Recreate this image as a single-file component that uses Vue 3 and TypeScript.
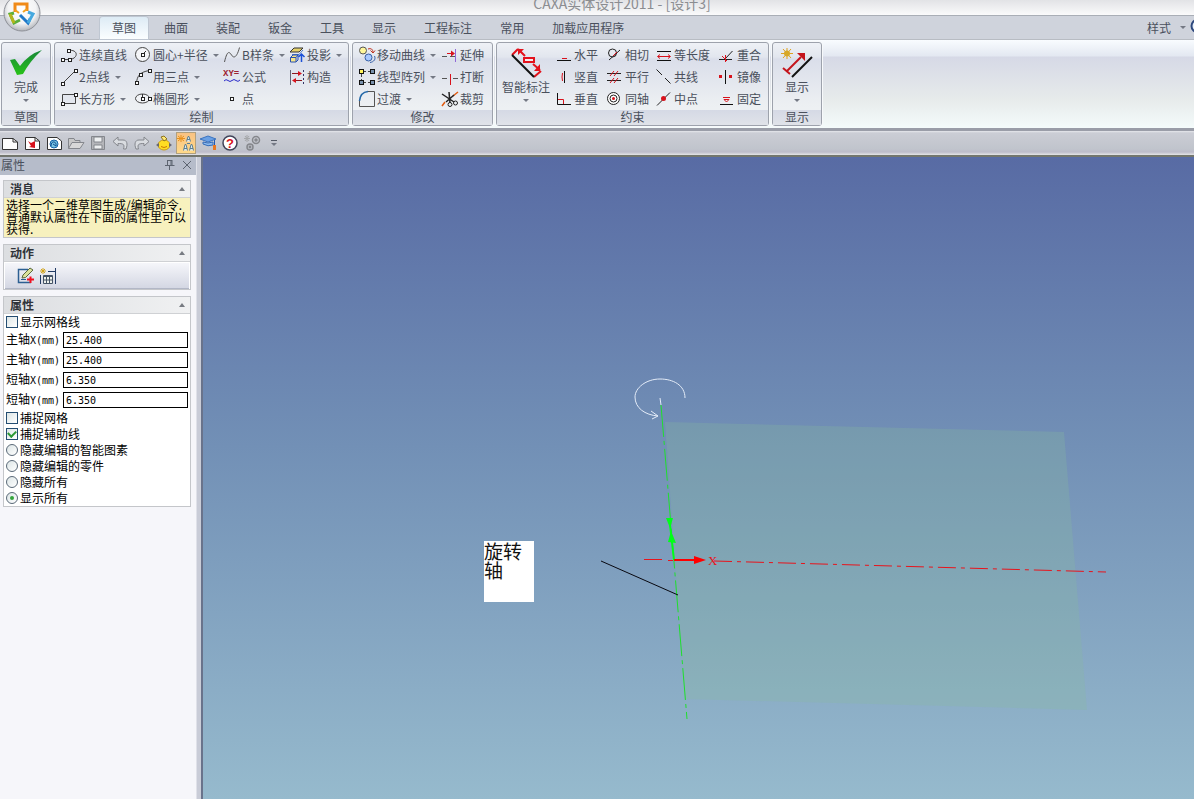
<script setup lang="ts">
import { ref } from 'vue'

interface Command {
  label: string
  icon: string
  menu?: boolean
}

const node = (x: number, y: number): string =>
  `<rect x="${x - 1}" y="${y - 1}" width="3" height="3" fill="#fff" stroke="#222" shape-rendering="crispEdges"/>`
const line = (d: string, color = '#222', width = 1): string =>
  `<path d="${d}" fill="none" stroke="${color}" stroke-width="${width}"/>`
const solid = (d: string, color: string, stroke = 'none'): string =>
  `<path d="${d}" fill="${color}" stroke="${stroke}"/>`

const RED = '#d8121c'
const GREY = '#84878d'

const icons: Record<string, string> = {
  polyline: line('M2.5 13.5H9.5M8.5 4.500C18 3 19 12 10 13.5', '#444') + node(2, 13) + node(9, 13) + node(8, 4),
  line: line('M2.5 15.5L15.5 2.5', '#444') + node(2, 15) + node(15, 2),
  rect: solid('M2.5 4.5H15.5V13.5H2.5Z', '#e3e7ee', '#444') + node(2, 13) + node(15, 4),
  circle: '<circle cx="8.500" cy="8.500" r="7" fill="#f4f5f8" stroke="#444"/>' + line('M9 8L12 5', '#333') + node(8, 8),
  arc: line('M2.5 15C3 9 5 4 15.5 2.5', '#444') + node(2, 14) + node(6, 6) + node(15, 2),
  ellipse: '<ellipse cx="8.500" cy="8.500" rx="7" ry="4.5" fill="#f1f3f6" stroke="#444"/>' + line('M8.500 4V8', '#333') + node(8, 8) + node(15, 8),
  spline: line('M1.5 16C4 5 6 5 8.5 9S14 11 16.5 1.5', '#555'),
  formula: '<text x="0" y="8" font-size="9" font-weight="700" font-family="Liberation Mono, monospace" fill="#9c2030">XY=</text>' + line('M1 13Q3 10.500 5 12.5T9 12.5T13 12.5T17 12', '#2a2acb'),
  point: node(8, 8),
  project: solid('M6 2H15L11 6H2Z', '#e6d26a', '#333') + line('M4 8.500H11L15 4', '#4b78c8') + solid('M2.500 11.500L5 9H10L8 11.500V16H2.500Z', '#f6e68b', '#2850b0') + line('M2.500 11.500H8M10 9V14L8 16', '#2850b0') + line('M13.500 16V8M10.500 11L13.500 8L16.500 11', '#1c50d8', 1.500),
  construct: line('M2.500 2V17', '#667') + '<path d="M15.500 2V17" stroke="#336" stroke-dasharray="2 2"/>' + line('M4 5.500H13M5 12.500H14', '#8c1a20') + solid('M10 3L14 5.500L10 8Z', RED) + solid('M8 10L4 12.500L8 15Z', RED),
  move: '<circle cx="5" cy="4.500" r="3.500" fill="#fff79a" stroke="#555"/>' + line('M10 3C13 2 15 3 15 7M12.500 4.500L15 7L17 4.500', '#c0301c') + '<circle cx="10.500" cy="11.500" r="3.500" fill="#a8c8ff" stroke="#3760a8"/>' + line('M16.500 10C18 13 16 16 12 16.500', '#3760a8'),
  array: '<path d="M5 3.500H14M3.500 6V14M5 14.500H14" stroke="#444" stroke-dasharray="3 2"/>' + '<g stroke="#111"><rect x="1.500" y="1.500" width="4" height="4" fill="#fff25a"/><rect x="12.500" y="1.500" width="4" height="4" fill="#7890ac"/><rect x="1.500" y="12.500" width="4" height="4" fill="#7890ac"/><rect x="12.500" y="12.500" width="4" height="4" fill="#7890ac"/></g>',
  fillet: line('M1.500 10V16.500H16.500V1.500H10', '#555') + line('M1.500 11C2 5 5 2 10 1.500', '#2468a8', 1.500),
  extend: line('M1 10.500H6M9 10.500H14', '#555') + line('M14.500 3V16', '#9068d8') + line('M6 7.500H12', RED) + solid('M10 4.500L14 7.500L10 10.500Z', RED),
  split: line('M1 10.500H6M12 10.500H17', '#555') + line('M9.500 6V17', RED),
  trim: line('M1 16L4 12M12 6L17 2', '#e05a10', 1.500) + line('M1 4L13 12M8 2L9 13M13 5L5 12', '#222', 1.500) + '<circle cx="9" cy="14.500" r="2" fill="none" stroke="#222"/><circle cx="14.500" cy="13" r="2" fill="none" stroke="#222"/>',
  horizontal: line('M2 14.500H16', '#111') + line('M7 12.500H12', RED),
  vertical: line('M9.500 3V15', '#111') + line('M7.500 5Q6.500 9 7.500 13', RED),
  perpendicular: line('M2.500 3V14.500H16', '#111') + line('M3 9.500H8.500V14', RED),
  tangent: '<circle cx="6.500" cy="7" r="4" fill="none" stroke="#222"/>' + line('M3 14L14 4', '#222') + line('M7 10L11 6', RED),
  parallel: line('M1 5.500H15M1 12.500H15', '#222') + line('M4 8L8 3M8 8L12 3M4 15L8 10M8 15L12 10', RED),
  concentric: '<circle cx="7.500" cy="8.500" r="6" fill="#fff" stroke="#222"/><circle cx="7.500" cy="8.500" r="3.500" fill="#fff" stroke="#222"/><circle cx="7.500" cy="8.500" r="1.500" fill="#d8121c"/>',
  equal: line('M2 5.500H16M2 14.500H16', '#111') + line('M3 10.500H15M5 8.500L2.500 10.500L5 12.500M13 8.500L15.500 10.500L13 12.500', RED),
  collinear: line('M1.500 1.500L7 7M10 10L15.500 15.500', '#222'),
  midpoint: line('M2 15.500L15 2.500', '#222') + '<circle cx="8.500" cy="8.500" r="2.500" fill="#d8121c"/>',
  coincident: line('M1 13.500H14M7 13L14.500 5', '#222') + line('M4 10L9 15M7.500 9V16', RED),
  mirror: line('M7.500 2V16', '#111') + '<path d="M1 7h3v3h-3zM11 7h3v3h-3z" fill="#d8121c"/>',
  fix: line('M2 14.500H15', '#111') + line('M5 7.500H12M6 9.500L8.500 12L11 9.500Z', RED),
  blank: solid('M1.500 4.500H12L16.500 8V15.500H1.500Z', '#fdfdfd', '#333') + line('M12 4.500V8H16.500', '#333'),
  newPart: solid('M2.500 3.500H12L16.500 7V15.500H2.500Z', '#fff', '#333') + line('M12 3.500V7H16', '#333') + solid('M5 7L8 9L12 7L12 14L6 13L8 12Z', RED),
  newDrawing: solid('M2.500 3.500H12L16.500 7V15.500H2.500Z', '#fff', '#333') + '<circle cx="9" cy="10" r="4" fill="#79c5e4" stroke="#1663a8"/>' + line('M6 12C6 6 12 7 11 12L8 10', '#0b4b90'),
  open: solid('M1.500 14.500V4.500H7L8 6.500H13V8.500', '#c8c8c8', GREY) + solid('M1.500 14.500L5 8.500H17L13 14.500Z', '#d8d8d8', GREY),
  save: solid('M2.500 2.500H15.500V15.500H2.500Z', '#b4b5b9', GREY) + solid('M5 3H13V8H5ZM5 11H13V15H5Z', '#eef0f1', GREY),
  undo: solid('M2 7.500L7 3V6H12C16 6 17 10 15 15H12.500C14 10 12 9.500 7 9.500V12Z', '#d9dce0', GREY),
  redo: solid('M16 7.500L11 3V6H6C2 6 1 10 3 15H5.500C4 10 6 9.500 11 9.500V12Z', '#d9dce0', GREY),
  ball: '<ellipse cx="9" cy="11" rx="6" ry="5" fill="#ffdd22" stroke="#c79c1a"/>' + solid('M6 3L9 2L12 5L9 7Z', '#ffe977', '#8c7320') + solid('M1 11L4 9V13ZM17 11L14 9V13Z', '#667') + line('M6 12.500Q9 14.500 12 12.500', '#cb7a00'),
  tree: line('M4 1V8M0 4.500H8M1 2L7 7M7 2L1 7', '#e8901b') + '<g fill="#dce9ef" stroke="#5c7f92"><path d="M9.500 7.500L11 2.500H12L13.500 7.500M10 5.500H13M6.500 16.500L8 10.500H9L10.500 16.500M7 14.500H10M12.500 16.500L14 10.500H15L16.500 16.500M13 14.500H16M10 9.500H13"/></g>',
  learn: solid('M1 5L9 2L17 5L9 8Z', '#6aa0e4', '#3b74c0') + solid('M4 8L9 9L14 8V11Q9 13 4 10Z', '#8ab8ec', '#346db8') + line('M15.500 6V12', '#225ab5') + solid('M14 11H17V16H14Z', '#e87922'),
  help: '<circle cx="9" cy="9" r="7" fill="#fff" stroke="#41445a" stroke-width="1.500"/><text x="9" y="13.500" text-anchor="middle" font-family="Liberation Sans, sans-serif" font-size="13" font-weight="700" fill="#d8121c">?</text>',
  gears: '<g fill="none" stroke="#85878c" stroke-width="1.500"><circle cx="13" cy="6" r="3.500"/><circle cx="13" cy="6" r="1"/><circle cx="7" cy="13" r="3"/><circle cx="7" cy="13" r=".7"/></g>' + line('M4 1V8M1 4.500H7M2 2L6 7M6 2L2 7', '#a5a7aa'),
  editSketch: line('M11 2.500H1.500V15.500H14', '#2c5f92', 1.500) + line('M4 12.500H9', '#2c5f92') + solid('M5 11L6 8L13 1L16 3L8.500 10.500Z', '#dbe29b', '#5b683d') + line('M13.500 9.500V16M10 12.500H17', '#f01020', 2),
  newTable: line('M4 1V7M1 4H7M2 2L6 6M6 2L2 6', '#d2a51e') + line('M1.500 8V17M16.500 1V17M9 4.500H16', '#223b64') + solid('M4.500 8.500H13.500V16.500H4.500Z', '#edf1ec', '#445365') + line('M4.500 9.500H13.500M4.500 13H13.500M7.500 9V16M10.500 9V16', '#445365'),
}

const tabs = ['特征', '草图', '曲面', '装配', '钣金', '工具', '显示', '工程标注', '常用', '加载应用程序']
const activeTab = ref('草图')

const drawCommands: Command[] = [
  { label: '连续直线', icon: 'polyline' },
  { label: '2点线', icon: 'line', menu: true },
  { label: '长方形', icon: 'rect', menu: true },
  { label: '圆心+半径', icon: 'circle', menu: true },
  { label: '用三点', icon: 'arc', menu: true },
  { label: '椭圆形', icon: 'ellipse', menu: true },
  { label: 'B样条', icon: 'spline', menu: true },
  { label: '公式', icon: 'formula' },
  { label: '点', icon: 'point' },
  { label: '投影', icon: 'project', menu: true },
  { label: '构造', icon: 'construct' },
]
const modifyCommands: Command[] = [
  { label: '移动曲线', icon: 'move', menu: true },
  { label: '线型阵列', icon: 'array', menu: true },
  { label: '过渡', icon: 'fillet', menu: true },
  { label: '延伸', icon: 'extend' },
  { label: '打断', icon: 'split' },
  { label: '裁剪', icon: 'trim' },
]
const constraintCommands: Command[] = [
  { label: '水平', icon: 'horizontal' },
  { label: '竖直', icon: 'vertical' },
  { label: '垂直', icon: 'perpendicular' },
  { label: '相切', icon: 'tangent' },
  { label: '平行', icon: 'parallel' },
  { label: '同轴', icon: 'concentric' },
  { label: '等长度', icon: 'equal' },
  { label: '共线', icon: 'collinear' },
  { label: '中点', icon: 'midpoint' },
  { label: '重合', icon: 'coincident' },
  { label: '镜像', icon: 'mirror' },
  { label: '固定', icon: 'fix' },
]

const quickTools = ['blank', 'newPart', 'newDrawing', 'open', 'save', 'undo', 'redo', 'ball', 'tree', 'learn', 'help', 'gears']

const spacing = ref([
  { id: 'major-x', name: '主轴', unit: 'X(mm)', value: '25.400' },
  { id: 'major-y', name: '主轴', unit: 'Y(mm)', value: '25.400' },
  { id: 'minor-x', name: '短轴', unit: 'X(mm)', value: '6.350' },
  { id: 'minor-y', name: '短轴', unit: 'Y(mm)', value: '6.350' },
])
const showGrid = ref(false)
const snapGrid = ref(false)
const snapGuides = ref(true)
const visibilityOptions = ['隐藏编辑的智能图素', '隐藏编辑的零件', '隐藏所有', '显示所有']
const visibility = ref('显示所有')
</script>

<template>
  <div class="app">
    <header class="titlebar">
      <span class="title">CAXA实体设计2011 - [设计3]</span>
      <button class="orb" aria-label="CAXA">
        <svg width="38" height="38" viewBox="0 0 38 38">
          <defs>
            <radialGradient id="orbFill" cx=".5" cy=".4" r=".6">
              <stop offset="0" stop-color="#fff" />
              <stop offset=".65" stop-color="#f3f4f5" />
              <stop offset="1" stop-color="#b2b5bb" />
            </radialGradient>
          </defs>
          <circle cx="19" cy="19" r="18" fill="url(#orbFill)" stroke="#8f9299" />
          <g fill="none" stroke-width="3">
            <path d="M12 18V10H24V17" stroke="#f08a18" />
            <path d="M12 16L16 19M24 15L20 18" stroke="#f3a320" stroke-width="2" />
            <path d="M11 19L7 20L11 29L17 26" stroke="#5aae3a" />
            <path d="M7 20L11 29" stroke="#b5b51b" />
            <path d="M17 21L25 29L27 25" stroke="#1f78c8" />
            <path d="M25 29L30 20L25 18" stroke="#46a9df" />
          </g>
        </svg>
      </button>
    </header>

    <nav class="tabs">
      <button
        v-for="tab in tabs"
        :key="tab"
        class="tab"
        :class="{ active: tab === activeTab }"
        @click="activeTab = tab"
      >{{ tab }}</button>
      <button class="style-menu">样式<i class="caret"></i></button>
      <button class="edge-help" aria-label="帮助">
        <svg width="16" height="16" viewBox="0 0 16 16"><circle cx="8" cy="8" r="6.500" fill="#e8f0fa" stroke="#2c477c" stroke-width="2" /></svg>
      </button>
    </nav>

    <div class="ribbon">
      <section class="panel single">
        <button class="big">
          <svg width="36" height="32" viewBox="0 0 36 32">
            <defs><linearGradient id="tick" x1="0" y1="0" x2="0" y2="1"><stop offset="0" stop-color="#17863a" /><stop offset="1" stop-color="#28c318" /></linearGradient></defs>
            <path d="M2 13L7 12L12 19Q21 7 34 3Q22 14 15 27L9 28Z" fill="url(#tick)" />
          </svg>
          <span>完成</span><i class="caret"></i>
        </button>
        <h2>草图</h2>
      </section>

      <section class="panel draw">
        <div class="commands">
          <button v-for="c in drawCommands" :key="c.label" class="command">
            <svg class="icon" viewBox="0 0 18 18" v-html="icons[c.icon]"></svg>
            <span>{{ c.label }}</span><i v-if="c.menu" class="caret"></i>
          </button>
        </div>
        <h2>绘制</h2>
      </section>

      <section class="panel modify">
        <div class="commands">
          <button v-for="c in modifyCommands" :key="c.label" class="command">
            <svg class="icon" viewBox="0 0 18 18" v-html="icons[c.icon]"></svg>
            <span>{{ c.label }}</span><i v-if="c.menu" class="caret"></i>
          </button>
        </div>
        <h2>修改</h2>
      </section>

      <section class="panel constraint">
        <div class="panel-body">
          <button class="big">
            <svg width="36" height="32" viewBox="0 0 36 32">
              <g fill="none" stroke="#e3121c" stroke-width="2">
                <path d="M4 8L10 2M26 30L33 24" />
                <path d="M10 2L17 9M25 17L32 23" />
                <rect x="16" y="11" width="10" height="4" fill="#f6e9ec" />
              </g>
              <path d="M10 2H16L10 8ZM32 24H26L32 17Z" fill="#e3121c" />
              <path d="M4 8L26 30" stroke="#111" stroke-width="2" />
            </svg>
            <span>智能标注</span><i class="caret"></i>
          </button>
          <div class="commands">
            <button v-for="c in constraintCommands" :key="c.label" class="command">
              <svg class="icon" viewBox="0 0 18 18" v-html="icons[c.icon]"></svg>
              <span>{{ c.label }}</span>
            </button>
          </div>
        </div>
        <h2>约束</h2>
      </section>

      <section class="panel single">
        <button class="big">
          <svg width="36" height="32" viewBox="0 0 36 32">
            <path d="M8 1V12M2 6.500H14M4 2L12 11M12 2L4 11" stroke="#dfa11d" />
            <circle cx="8" cy="6.500" r="3" fill="#d7a827" />
            <path d="M8 24L22 10" stroke="#c4141c" stroke-width="2" />
            <path d="M18 6H26V14Z" fill="#c4141c" />
            <path d="M4 21L11 27" stroke="#c4141c" stroke-width="2" />
            <path d="M13 30L33 10" stroke="#111" stroke-width="2" />
          </svg>
          <span>显示</span><i class="caret"></i>
        </button>
        <h2>显示</h2>
      </section>
    </div>

    <div class="quickbar">
      <button v-for="tool in quickTools" :key="tool" class="quick" :class="{ pressed: tool === 'tree' }" :aria-label="tool">
        <svg class="icon" viewBox="0 0 18 18" v-html="icons[tool]"></svg>
      </button>
      <button class="quick more" aria-label="more"><i class="bar"></i><i class="caret"></i></button>
    </div>

    <div class="workspace">
      <aside class="sidebar">
        <div class="dock-title">
          <span>属性</span>
          <button aria-label="pin">
            <svg width="12" height="12" viewBox="0 0 12 12"><path d="M3.500 1V6.500M3.500 1.500H8M8 1V6.500M7 2V6M1 6.500H10.500M5.500 7V11" fill="none" stroke="#5d6470" /></svg>
          </button>
          <button aria-label="close">
            <svg width="10" height="10" viewBox="0 0 10 10"><path d="M1 1L9 9M9 1L1 9" stroke="#5d6470" /></svg>
          </button>
        </div>

        <section class="box">
          <h3>消息<i class="caret up"></i></h3>
          <p class="message">选择一个二维草图生成/编辑命令.<br />普通默认属性在下面的属性里可以<br />获得.</p>
        </section>

        <section class="box">
          <h3>动作<i class="caret up"></i></h3>
          <div class="actions">
            <button aria-label="edit"><svg class="icon" viewBox="0 0 18 18" v-html="icons.editSketch"></svg></button>
            <button aria-label="table"><svg class="icon" viewBox="0 0 18 18" v-html="icons.newTable"></svg></button>
          </div>
        </section>

        <section class="box">
          <h3>属性<i class="caret up"></i></h3>
          <label class="option"><input v-model="showGrid" type="checkbox" />显示网格线</label>
          <div v-for="field in spacing" :key="field.id" class="field">
            <label :for="field.id">{{ field.name }}<span class="mono">{{ field.unit }}</span></label>
            <input :id="field.id" v-model="field.value" class="mono" type="text" />
          </div>
          <label class="option"><input v-model="snapGrid" type="checkbox" />捕捉网格</label>
          <label class="option"><input v-model="snapGuides" type="checkbox" />捕捉辅助线</label>
          <label v-for="option in visibilityOptions" :key="option" class="option">
            <input v-model="visibility" type="radio" name="visibility" :value="option" />{{ option }}
          </label>
        </section>
      </aside>

      <main class="viewport">
        <svg class="scene">
          <polygon points="462,265 861,275 884,553 482,542" fill="#88ba9e" fill-opacity=".28" />
          <g fill="none" stroke="#e4ecf8">
            <path d="M482 241C482 228 470 222 457 222C443 222 432 231 432 240C432 251 442 258 455 259" />
            <path d="M448 254L455 259L449 262" />
            <path d="M457 241L458 248" />
          </g>
          <path d="M458 248L484 562" stroke="#1fe02c" stroke-dasharray="32 4 4 4" />
          <path d="M467 368L471 403" stroke="#00ff18" stroke-width="2" />
          <path d="M463 361H470L467 371ZM465 385L468 374L473 386Z" fill="#00ff18" />
          <path d="M441 402.500H459M465 403.500H470" stroke="#e8141c" />
          <path d="M511 404L903 415" stroke="#e8141c" stroke-dasharray="18 5 4 5" />
          <path d="M471 403H493" stroke="#f00" stroke-width="2" />
          <path d="M491 399L503 403L491 407Z" fill="#f00" />
          <text x="505" y="408" class="axis">X</text>
          <path d="M398 404L475 438" stroke="#080810" />
        </svg>
        <div class="note">旋转<br />轴</div>
      </main>
    </div>
  </div>
</template>

<style>
html,
body {
  margin: 0;
  overflow: hidden;
}
</style>

<style scoped>
.app {
  display: flex;
  flex-direction: column;
  height: 100vh;
  overflow: hidden;
  font: 12px/16px "Noto Sans CJK SC", "Liberation Sans", sans-serif;
  color: #4a505c;
  background: #cfd3dc;
}
.app * {
  box-sizing: border-box;
}
button {
  padding: 0;
  border: 0;
  background: none;
  font: inherit;
  color: inherit;
}
h2,
h3,
p {
  margin: 0;
}
.icon {
  width: 18px;
  height: 18px;
  flex: none;
}
.caret {
  display: inline-block;
  flex: none;
  border: 3px solid transparent;
  border-top-color: #747984;
  border-bottom: 0;
}
.caret.up {
  border-top: 0;
  border-bottom: 4px solid #777b82;
}

.titlebar {
  position: relative;
  height: 15px;
  flex: none;
  background: linear-gradient(#e2e3e6, #fafafb);
  display: flex;
  justify-content: center;
  align-items: flex-start;
}
.title {
  margin: -6px 0 0 50px;
  font-size: 14px;
  line-height: 18px;
  color: #8b8d91;
}
.orb {
  position: absolute;
  left: 3px;
  top: -6px;
  height: 38px;
}

.tabs {
  display: flex;
  flex: none;
  height: 25px;
  padding-left: 46px;
  border-top: 1px solid #a9aeb6;
  border-bottom: 1px solid #b8bcc3;
  background: #cfd3dc;
}
.tab {
  margin: 1px 2px 0;
  padding: 0 12px;
}
.tab.active {
  border-radius: 3px 3px 0 0;
  background: linear-gradient(#ddebf5, #fbfeff);
  box-shadow: 0 0 0 1px #bfc7d2, 0 2px 0 #fbfeff;
}
.style-menu {
  display: flex;
  align-items: center;
  gap: 9px;
  margin-left: auto;
}
.edge-help {
  width: 4px;
  margin-left: 4px;
  overflow: hidden;
}

.ribbon {
  display: flex;
  flex: none;
  gap: 3px;
  height: 88px;
  padding: 2px 1px;
  background: linear-gradient(#f9fcff, #e3e8f1 16px, #d6d9e6 17px, #e7ebeb 60px, #f4fbfb);
}
.panel {
  display: flex;
  flex-direction: column;
  padding-top: 1px;
  border: 1px solid #9da2ac;
  border-radius: 3px;
  box-shadow: 0 0 0 1px #f7f9fb;
  background: linear-gradient(#eef1f6, #e2e6ee 14px, #dadeea 16px, #eceff2 60px, #f0f3f5);
}
.panel h2 {
  height: 15px;
  font: inherit;
  line-height: 14px;
  text-align: center;
  background: linear-gradient(#d5d9e5, #e0e3e9);
}
.panel-body {
  display: flex;
}
.single {
  width: 50px;
}
.draw {
  width: 295px;
}
.modify {
  width: 141px;
}
.constraint {
  width: 273px;
}
.commands {
  display: grid;
  grid-auto-flow: column;
  grid-template-rows: repeat(3, 22px);
}
.draw .commands {
  margin-left: 5px;
  grid-template-columns: 74px 89px 65px 60px;
}
.modify .commands {
  margin-left: 5px;
  grid-template-columns: 83px 51px;
}
.constraint .commands {
  grid-template-columns: 51px 49px 63px 50px;
}
.command {
  display: flex;
  align-items: center;
  gap: 1px;
  white-space: nowrap;
}
.command .caret {
  margin-left: 4px;
}
.big {
  display: flex;
  flex-direction: column;
  align-items: center;
  height: 66px;
  padding-top: 3px;
}
.big .caret {
  margin-top: 4px;
}
.constraint .big {
  width: 58px;
}

.quickbar {
  display: flex;
  flex: none;
  align-items: center;
  gap: 2px;
  height: 29px;
  border-top: 3px solid #9a9da8;
  border-bottom: 2px solid #73766e;
  background: linear-gradient(#e6e7ec, #cbcdd5 2px, #c0c4cc 18px, #bdbcca 21px, #e4e4e6);
}
.quick {
  display: flex;
  justify-content: center;
  align-items: center;
  width: 20px;
  height: 22px;
}
.quick.pressed {
  border: 1px solid #b1a07e;
  background: linear-gradient(#f9c282, #ffd989);
}
.more {
  flex-direction: column;
  gap: 2px;
}
.bar {
  width: 6px;
  height: 1px;
  background: #555b66;
}

.workspace {
  display: flex;
  flex: 1;
  min-height: 0;
}
.sidebar {
  width: 203px;
  flex: none;
  display: flex;
  flex-direction: column;
  align-items: flex-start;
  gap: 6px;
  border-right: 2px solid #69738b;
  background: linear-gradient(90deg, #f6f6fa 196px, #c9ccd7 197px);
}
.dock-title {
  display: flex;
  align-items: center;
  gap: 6px;
  width: 196px;
  height: 18px;
  margin-bottom: -1px;
  padding: 0 4px 2px 1px;
  background: #b6bcca;
}
.dock-title span {
  margin-right: auto;
}
.dock-title button {
  display: flex;
}
.box {
  width: 188px;
  margin-left: 3px;
  border: 1px solid #c4c6ca;
  background: #fff;
  color: #000;
}
.box h3 {
  display: flex;
  align-items: center;
  justify-content: space-between;
  height: 17px;
  padding: 0 5px 0 6px;
  font-size: 12px;
  font-weight: 700;
  color: #30343a;
  border-bottom: 1px solid #cfd1d4;
  background: linear-gradient(90deg, #dcdee1, #f0f1f2);
}
.message {
  height: 39px;
  padding: 1px 2px;
  line-height: 12px;
  white-space: nowrap;
  background: #f7f1be;
}
.actions {
  display: flex;
  align-items: center;
  gap: 4px;
  height: 26px;
  margin: 1px 1px 0;
  padding-left: 12px;
  background: linear-gradient(#f5f6fa, #d4d7e3);
  border-bottom: 1px solid #b2b7c6;
}
.box:nth-of-type(2) {
  height: 46px;
}
.actions button {
  display: flex;
}
.option {
  display: flex;
  align-items: center;
  gap: 2px;
  height: 16px;
  padding-left: 2px;
}
.option input {
  appearance: none;
  display: grid;
  place-items: center;
  width: 12px;
  height: 12px;
  margin: 0;
  border: 1px solid #244d72;
  background: linear-gradient(135deg, #dce5e6, #fff);
}
.option input[type='radio'] {
  border-color: #5a6978;
  border-radius: 50%;
}
.option input:checked::before {
  content: '';
}
.option input[type='checkbox']:checked::before {
  width: 6px;
  height: 4px;
  margin-bottom: 2px;
  border: solid #2c9834;
  border-width: 0 0 2px 2px;
  transform: rotate(-45deg);
}
.option input[type='radio']:checked::before {
  width: 4px;
  height: 4px;
  border-radius: 50%;
  background: #35a53c;
}
.field {
  display: flex;
  align-items: center;
  height: 20px;
  padding: 0 2px;
}
.field label {
  width: 57px;
  white-space: nowrap;
}
.mono {
  font-family: "DejaVu Sans Mono", monospace;
  font-size: 10px;
}
.field input {
  flex: 1;
  min-width: 0;
  height: 16px;
  padding: 0 2px;
  border: 1px solid #000;
  border-radius: 0;
  background: #fff;
  color: #000;
}

.viewport {
  position: relative;
  flex: 1;
  min-width: 0;
  background: linear-gradient(#586ba4, #7290b6 45%, #96bacd);
}
.scene {
  display: block;
  width: 100%;
  height: 100%;
}
.axis {
  font: 13px "Liberation Serif", serif;
  fill: #e8141c;
}
.note {
  position: absolute;
  left: 281px;
  top: 384px;
  width: 50px;
  height: 61px;
  background: #fff;
  color: #111;
  font-size: 19px;
  line-height: 19px;
}
</style>
